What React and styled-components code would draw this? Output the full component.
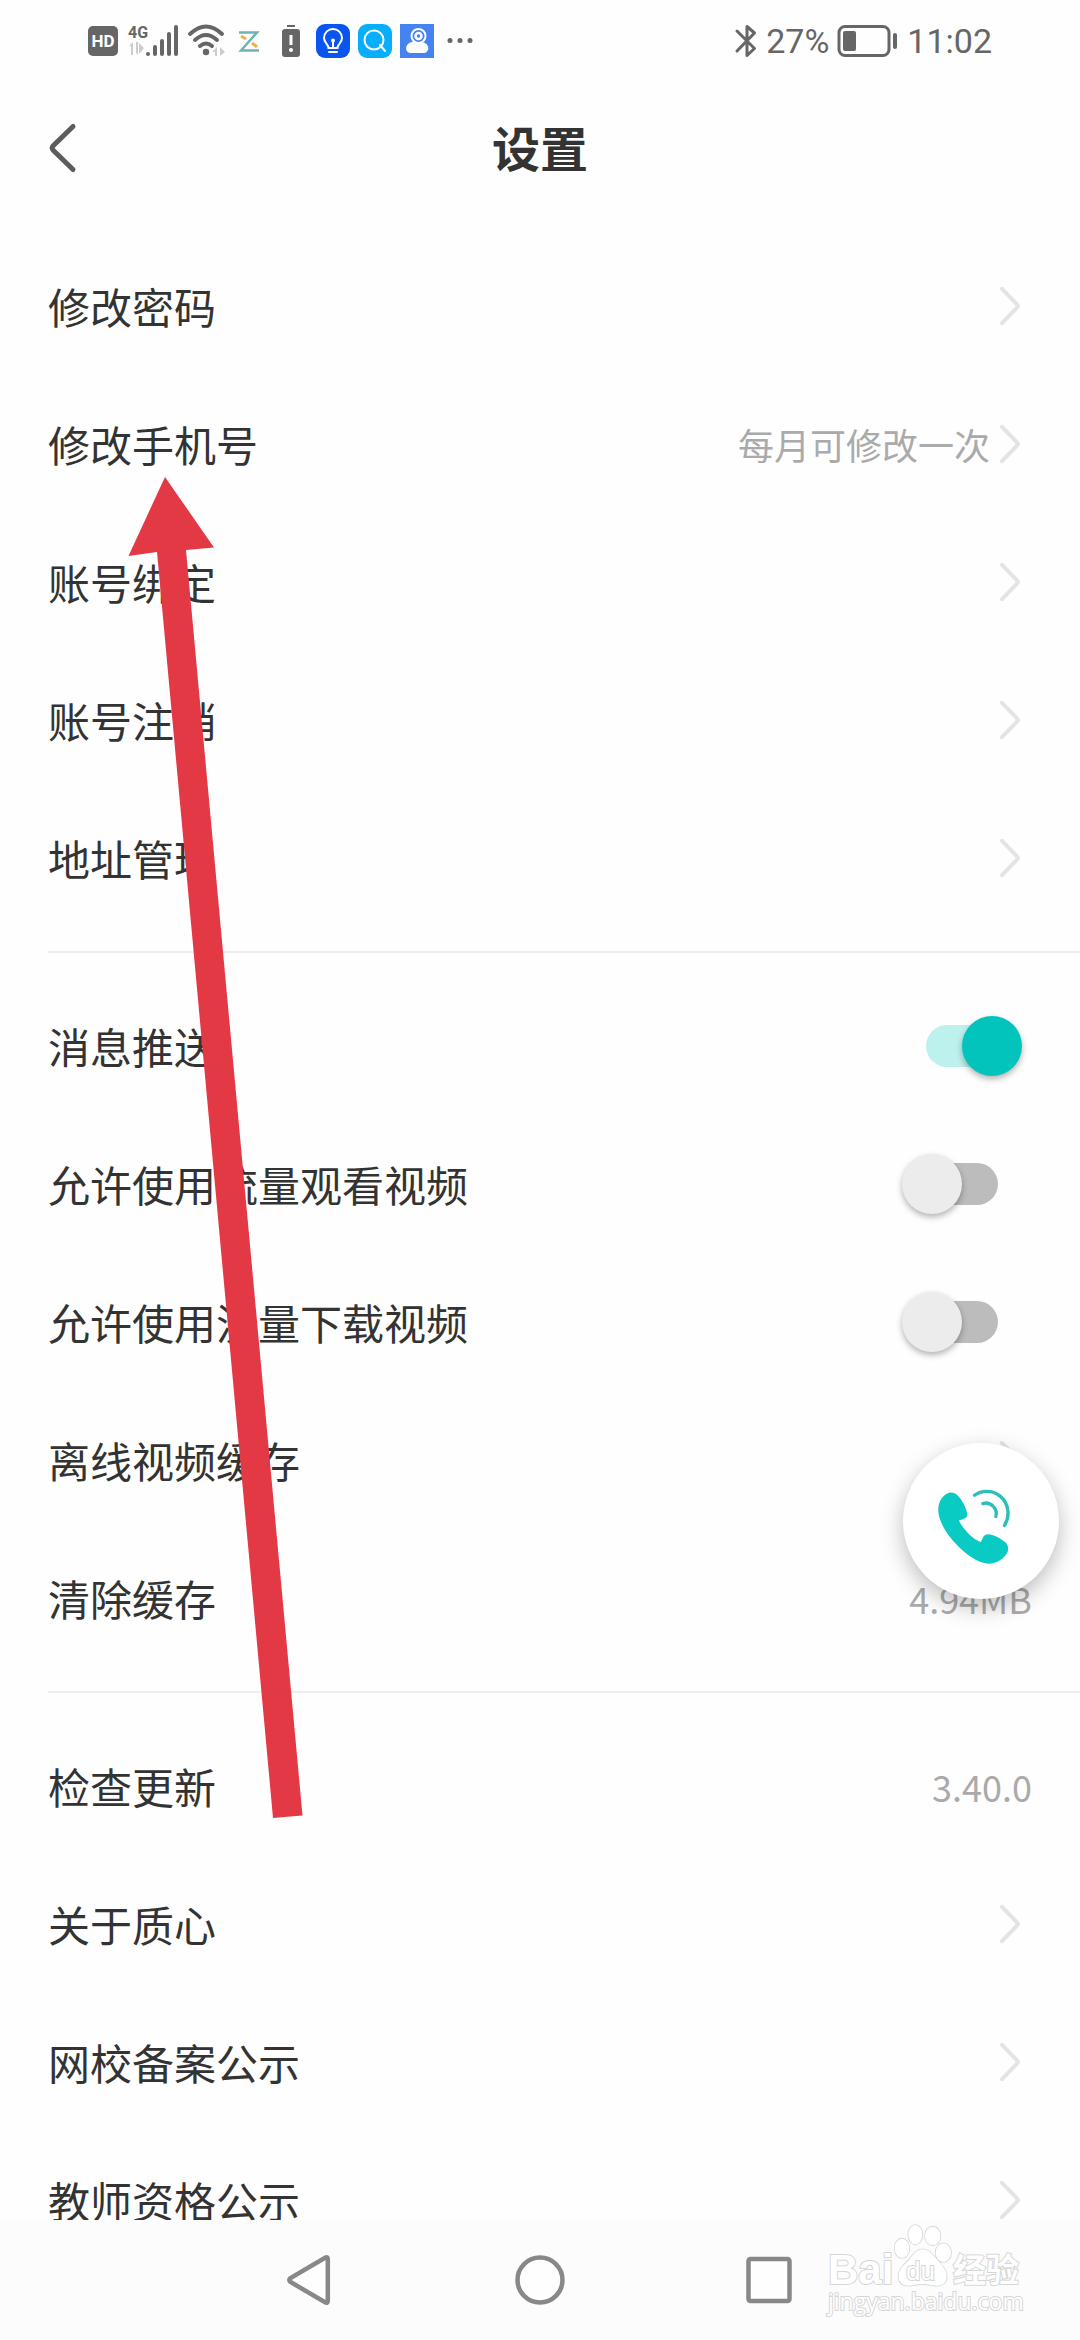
import { useState } from 'react';
import styled, { createGlobalStyle } from 'styled-components';

const accountRows = [
  { title: '修改密码' },
  { title: '修改手机号', hint: '每月可修改一次' },
  { title: '账号绑定' },
  { title: '账号注销' },
  { title: '地址管理' },
];

const aboutRows = ['关于质心', '网校备案公示', '教师资格公示'];

export default function App () {
  const [push, setPush] = useState(true);
  const [watch, setWatch] = useState(false);
  const [download, setDownload] = useState(false);

  return (
    <Screen>
      <GlobalStyle />
      <StatusBar>
        <StatusGroup>
          <HdIcon />
          <SignalIcon />
          <WifiIcon />
          <ZIcon />
          <BatteryAlertIcon />
          <BulbIcon />
          <SearchIcon />
          <ContactIcon />
          <DotsIcon />
        </StatusGroup>
        <StatusGroup>
          <BluetoothIcon />
          <span>27%</span>
          <BatteryIcon />
          <span>11:02</span>
        </StatusGroup>
      </StatusBar>
      <Header>
        <BackBtn aria-label='返回'>
          <svg width='42' height='60' viewBox='0 0 42 60' fill='none' stroke='#5c5c5c' strokeWidth='5' strokeLinecap='round' strokeLinejoin='round'>
            <path d='M25 8.500 L5.200 27.800 Q3.200 30 5.200 32.200 L25 51.500' />
          </svg>
        </BackBtn>
        <Title>设置</Title>
      </Header>
      <Content>
        <Section>
          {accountRows.map(row => <LinkRow key={row.title} title={row.title} hint={row.hint} />)}
        </Section>
        <Section>
          <SwitchRow title='消息推送' checked={push} func={setPush} />
          <SwitchRow title='允许使用流量观看视频' checked={watch} func={setWatch} />
          <SwitchRow title='允许使用流量下载视频' checked={download} func={setDownload} />
          <LinkRow title='离线视频缓存' />
          <RowButton>清除缓存<Hint>4.94MB</Hint></RowButton>
        </Section>
        <Section>
          <RowButton>检查更新<Hint>3.40.0</Hint></RowButton>
          {aboutRows.map(title => <LinkRow key={title} title={title} />)}
        </Section>
      </Content>
      <NavBar>
        <NavBtn aria-label='后退'>
          <svg width='60' height='60' viewBox='0 0 60 60'>
            <path d='M45.500 7.500 Q47.800 6.500 47.800 9 V51 Q47.800 53.500 45.500 52.500 L10.500 32 Q8 30 10.500 28 Z' />
          </svg>
        </NavBtn>
        <NavBtn aria-label='主页'>
          <svg width='60' height='60' viewBox='0 0 60 60'><circle cx='30' cy='30' r='22.500' /></svg>
        </NavBtn>
        <NavBtn aria-label='最近任务'>
          <svg width='60' height='60' viewBox='0 0 60 60'><rect x='8.500' y='9' width='41' height='42' rx='2' /></svg>
        </NavBtn>
        <Watermark />
      </NavBar>
      <CallBtn aria-label='联系客服'>
        <svg width='156' height='156' viewBox='129 129 469 469' fill='none' strokeLinecap='round'>
          <path fill='#0acbc4' d='M275 278 C285 278 296 288 303 298 C314 314 322 332 322 346 C322 354 310 358 297 362 C310 388 340 420 363 427 C370 412 372 403 386 403 C402 404 426 417 439 430 C447 440 447 452 440 463 C428 482 405 492 388 492 C370 492 345 482 320 462 C280 430 250 390 239 355 C232 332 234 310 246 294 C255 283 265 278 275 278 Z' />
          <path stroke='#2abfb8' strokeWidth='10' d='M344 286 C365 270 398 270 420 288 C446 309 453 346 434 377' />
          <path stroke='#2abfb8' strokeWidth='10' d='M369 311 C392 304 415 326 408 350' />
        </svg>
      </CallBtn>
      <Arrow width='180' height='1344' viewBox='126 476 180 1344' aria-hidden='true'>
        <path d='M165 477 L214 547.500 L186 550 L302.500 1815.500 L273 1818 L157 552 L128.500 556 Z' />
      </Arrow>
    </Screen>
  )
}

function LinkRow ({title, hint}) {
  return (
    <RowLink href='#'>
      {title}
      <RowEnd>
        {hint && <Hint>{hint}</Hint>}
        <svg width='42' height='42' viewBox='0 0 42 42' fill='none' stroke='#e4e4e4' strokeWidth='4' strokeLinecap='round' strokeLinejoin='round'>
          <path d='M12 3.800 L27.200 19.600 Q28.600 21 27.200 22.400 L12 38.200' />
        </svg>
      </RowEnd>
    </RowLink>
  )
}

function SwitchRow ({title, checked, func}) {
  return (
    <RowLabel>
      {title}
      <Switch type='checkbox' checked={checked} onChange={e => func(e.target.checked)} />
    </RowLabel>
  )
}

function HdIcon () {
  return (
    <svg width='32' height='34' viewBox='0 0 32 34'>
      <rect y='2' width='30' height='30' rx='5' fill='#666' />
      <text x='15' y='23' textAnchor='middle' fontSize='17' fontWeight='700' fill='#fff'>HD</text>
    </svg>
  )
}

function SignalIcon () {
  return (
    <svg width='52' height='34' viewBox='0 0 52 34'>
      <text x='0' y='14' fontSize='16' fontWeight='700' fill='#666'>4G</text>
      <path fill='#ccc' d='M1 22 L5 18 V31 H3 V22 Z M8 18 H10 V31 L8 29 Z M11 19 L16 24 L11 30 Z' />
      <g stroke='#666' strokeWidth='4' strokeLinecap='round'>
        <path d='M20 30 V30.100 M27 23 V30 M34 17 V30 M41 10 V30 M48 3 V30' />
      </g>
    </svg>
  )
}

function WifiIcon () {
  return (
    <svg width='36' height='34' viewBox='0 0 36 34'>
      <g fill='none' stroke='#666' strokeWidth='4' strokeLinecap='round'>
        <path d='M2 10 Q18 -5 34 10' />
        <path d='M7 16 Q18 6 29 16' />
        <path d='M12 22 Q18 17 24 22' />
      </g>
      <circle cx='18' cy='28' r='3.200' fill='#666' />
      <path fill='#ccc' d='M24 28 L29 23 V32 H27 V28 Z M32 23 L37 28 L32 32 Z' />
    </svg>
  )
}

function ZIcon () {
  return (
    <svg width='34' height='34' viewBox='0 0 34 34' fill='none'>
      <path stroke='#e5b548' strokeWidth='3' d='M9 12 L14 15 M20 19 L25 23' />
      <path stroke='#6fb3b5' strokeWidth='2.500' d='M7 8.500 H25 L9 26.500 H27' />
    </svg>
  )
}

function BatteryAlertIcon () {
  return (
    <svg width='34' height='34' viewBox='0 0 34 34'>
      <path fill='#666' d='M13 1 H21 V3 H13 Z' />
      <rect x='8' y='5' width='18' height='28' rx='3' fill='#666' />
      <path stroke='#fff' strokeWidth='3' d='M17 11 V21' />
      <circle cx='17' cy='26' r='2' fill='#fff' />
    </svg>
  )
}

function BulbIcon () {
  return (
    <svg width='34' height='34' viewBox='0 0 34 34' fill='none' stroke='#fff' strokeWidth='2' strokeLinecap='round'>
      <rect width='34' height='34' rx='9' fill='#0a54f0' stroke='none' />
      <path d='M12.500 24 C12.500 20 8 19 8 14 A9 9 0 0 1 26 14 C26 19 21.500 20 21.500 24 Z M13 28 H21 M17 18 V23' />
      <circle cx='17' cy='16.500' r='2' fill='#fff' stroke='none' />
    </svg>
  )
}

function SearchIcon () {
  return (
    <svg width='34' height='34' viewBox='0 0 34 34' fill='none' stroke='#fff' strokeWidth='2' strokeLinecap='round'>
      <rect width='34' height='34' rx='9' fill='#06aefc' stroke='none' />
      <circle cx='16' cy='16' r='9.500' />
      <path d='M22 21 L27 27' />
    </svg>
  )
}

function ContactIcon () {
  return (
    <svg width='34' height='34' viewBox='0 0 34 34'>
      <rect width='34' height='34' fill='#4583f0' />
      <path fill='#fff' d='M12 18 H22 C31 20 29 29 24 29 H10 C4 28 5 19 12 18 Z' />
      <circle cx='18.500' cy='12' r='7' fill='#4583f0' stroke='#fff' strokeWidth='2' />
      <circle cx='18.500' cy='12' r='3' fill='none' stroke='#fff' strokeWidth='2.500' />
    </svg>
  )
}

function DotsIcon () {
  return (
    <svg width='34' height='34' viewBox='0 0 34 34' fill='#666'>
      <circle cx='8' cy='16.500' r='2.500' />
      <circle cx='18' cy='16.500' r='2.500' />
      <circle cx='28' cy='16.500' r='2.500' />
    </svg>
  )
}

function BluetoothIcon () {
  return (
    <svg width='24' height='34' viewBox='0 0 24 34' fill='none' stroke='#666' strokeWidth='3' strokeLinecap='round' strokeLinejoin='round'>
      <path d='M3 7 L20.500 24.500 L13 31.500 V2.500 L20.500 9 L3 27' />
    </svg>
  )
}

function BatteryIcon () {
  return (
    <svg width='62' height='34' viewBox='0 0 62 34'>
      <rect x='2' y='2.500' width='50' height='29' rx='6' fill='none' stroke='#666' strokeWidth='3' />
      <rect x='6' y='7' width='13' height='20' rx='2' fill='#666' />
      <rect x='56' y='9' width='4' height='16' rx='2' fill='#666' />
    </svg>
  )
}

function Watermark () {
  return (
    <Mark width='200' height='100' viewBox='0 0 200 100'>
      <g transform='translate(-46 -80) scale(.3333)' strokeWidth='5'>
        <ellipse cx='366' cy='325' rx='22' ry='29' />
        <ellipse cx='406' cy='284' rx='21' ry='29' />
        <ellipse cx='458' cy='288' rx='23' ry='28' />
        <ellipse cx='490' cy='338' rx='23' ry='28' />
        <path d='M427 328 C445 328 455 340 465 352 C485 372 500 390 500 410 C500 430 485 437 470 437 C455 437 445 432 427 432 C410 432 400 437 385 437 C365 437 356 425 356 408 C356 390 370 375 385 362 C398 345 410 328 427 328 Z' />
      </g>
      <text x='2' y='64' fontSize='42'>Bai</text>
      <text x='80' y='60' fontSize='26' fontWeight='400'>du</text>
      <text x='127' y='62' fontSize='33'>经验</text>
      <MarkUrl x='2' y='90' fontSize='23'>jingyan.baidu.com</MarkUrl>
    </Mark>
  )
}

const GlobalStyle = createGlobalStyle`
  * {
    box-sizing: border-box;
  }
  body {
    margin: 0;
    background-color: #FEFEFE;
    font-family: 'Noto Sans CJK SC', sans-serif;
    color: #333333;
  }
  button {
    font-family: inherit;
    color: inherit;
    background: none;
    border: none;
    padding: 0;
  }
  svg {
    display: block;
    flex-shrink: 0;
    overflow: visible;
  }
`;
const Screen = styled.div`
    position: relative;
    display: flex;
    flex-direction: column;
    height: 100vh;
    overflow: hidden;
`;
const StatusBar = styled.div`
    display: flex;
    justify-content: space-between;
    align-items: center;
    height: 82px;
    padding: 0 88px;
    font-family: Roboto, sans-serif;
    font-size: 34px;
    color: #666666;
    flex-shrink: 0;
`;
const StatusGroup = styled.div`
    display: flex;
    align-items: center;
    gap: 8px;
`;
const Header = styled.header`
    display: grid;
    grid-template-columns: 1fr auto 1fr;
    align-items: center;
    height: 131px;
    padding: 0 48px;
    flex-shrink: 0;
`;
const BackBtn = styled.button`
    justify-self: start;
`;
const Title = styled.h1`
    margin: 0;
    padding-bottom: 4px;
    font-size: 48px;
    line-height: 60px;
    font-weight: bold;
`;
const Content = styled.main`
    flex: 1;
    min-height: 0;
    padding-top: 24px;
    overflow-y: auto;
    scrollbar-width: none;
`;
const Section = styled.section`
    margin-left: 48px;
    & + & {
      margin-top: 24px;
      padding-top: 24px;
      border-top: 2px solid #EEEEEE;
    }
`;
const Row = styled.div`
    display: flex;
    align-items: center;
    justify-content: space-between;
    width: 100%;
    height: 138px;
    padding: 0 48px 0 0;
    font-size: 42px;
    line-height: 60px;
    color: #333333;
    text-decoration: none;
`;
const RowLink = styled(Row).attrs({ as: 'a' })``;
const RowButton = styled(Row).attrs({ as: 'button' })``;
const RowLabel = styled(Row).attrs({ as: 'label' })``;
const RowEnd = styled.span`
    display: flex;
    align-items: center;
`;
const Hint = styled.span`
    font-size: 36px;
    color: #AAAAAA;
`;
const Switch = styled.input`
    appearance: none;
    position: relative;
    display: flex;
    align-items: center;
    justify-content: center;
    width: 120px;
    height: 60px;
    margin: 0 10px 0 0;
    &::before {
      content: '';
      width: 72px;
      height: 42px;
      border-radius: ${props => props.checked ? '21px 0 0 21px' : '0 21px 21px 0'};
      background-color: ${props => props.checked ? '#BDF1ED' : '#BCBCBC'};
    }
    &::after {
      content: '';
      position: absolute;
      top: 0;
      left: ${props => props.checked ? '60px' : '0'};
      width: 60px;
      height: 60px;
      border-radius: 50%;
      background-color: ${props => props.checked ? '#02C4BC' : '#ECECEC'};
      box-shadow: 0 3px 6px rgba(0, 0, 0, 0.3);
    }
`;
const NavBar = styled.nav`
    position: relative;
    display: flex;
    align-items: center;
    justify-content: center;
    gap: 170px;
    height: 120px;
    background-color: #FCFCFC;
    flex-shrink: 0;
`;
const NavBtn = styled.button`
    svg {
      fill: #FEFEFE;
      stroke: #888888;
      stroke-width: 4.5px;
    }
`;
const CallBtn = styled.button`
    position: absolute;
    right: 21px;
    bottom: 741px;
    width: 156px;
    height: 156px;
    border-radius: 50%;
    background-color: #FFFFFF;
    box-shadow: 0 8px 22px rgba(0, 0, 0, 0.26);
`;
const Arrow = styled.svg`
    position: absolute;
    top: 476px;
    left: 126px;
    fill: #E33945;
    pointer-events: none;
`;
const Mark = styled.svg`
    position: absolute;
    top: 0;
    right: 54px;
    fill: #FFFFFF;
    stroke: #D6D6D6;
    stroke-width: 2px;
    paint-order: stroke;
    font-family: 'Liberation Sans', 'Noto Sans CJK SC', sans-serif;
    font-weight: bold;
`;
const MarkUrl = styled.text`
    font-family: 'Open Sans', sans-serif;
    font-weight: 400;
`;
